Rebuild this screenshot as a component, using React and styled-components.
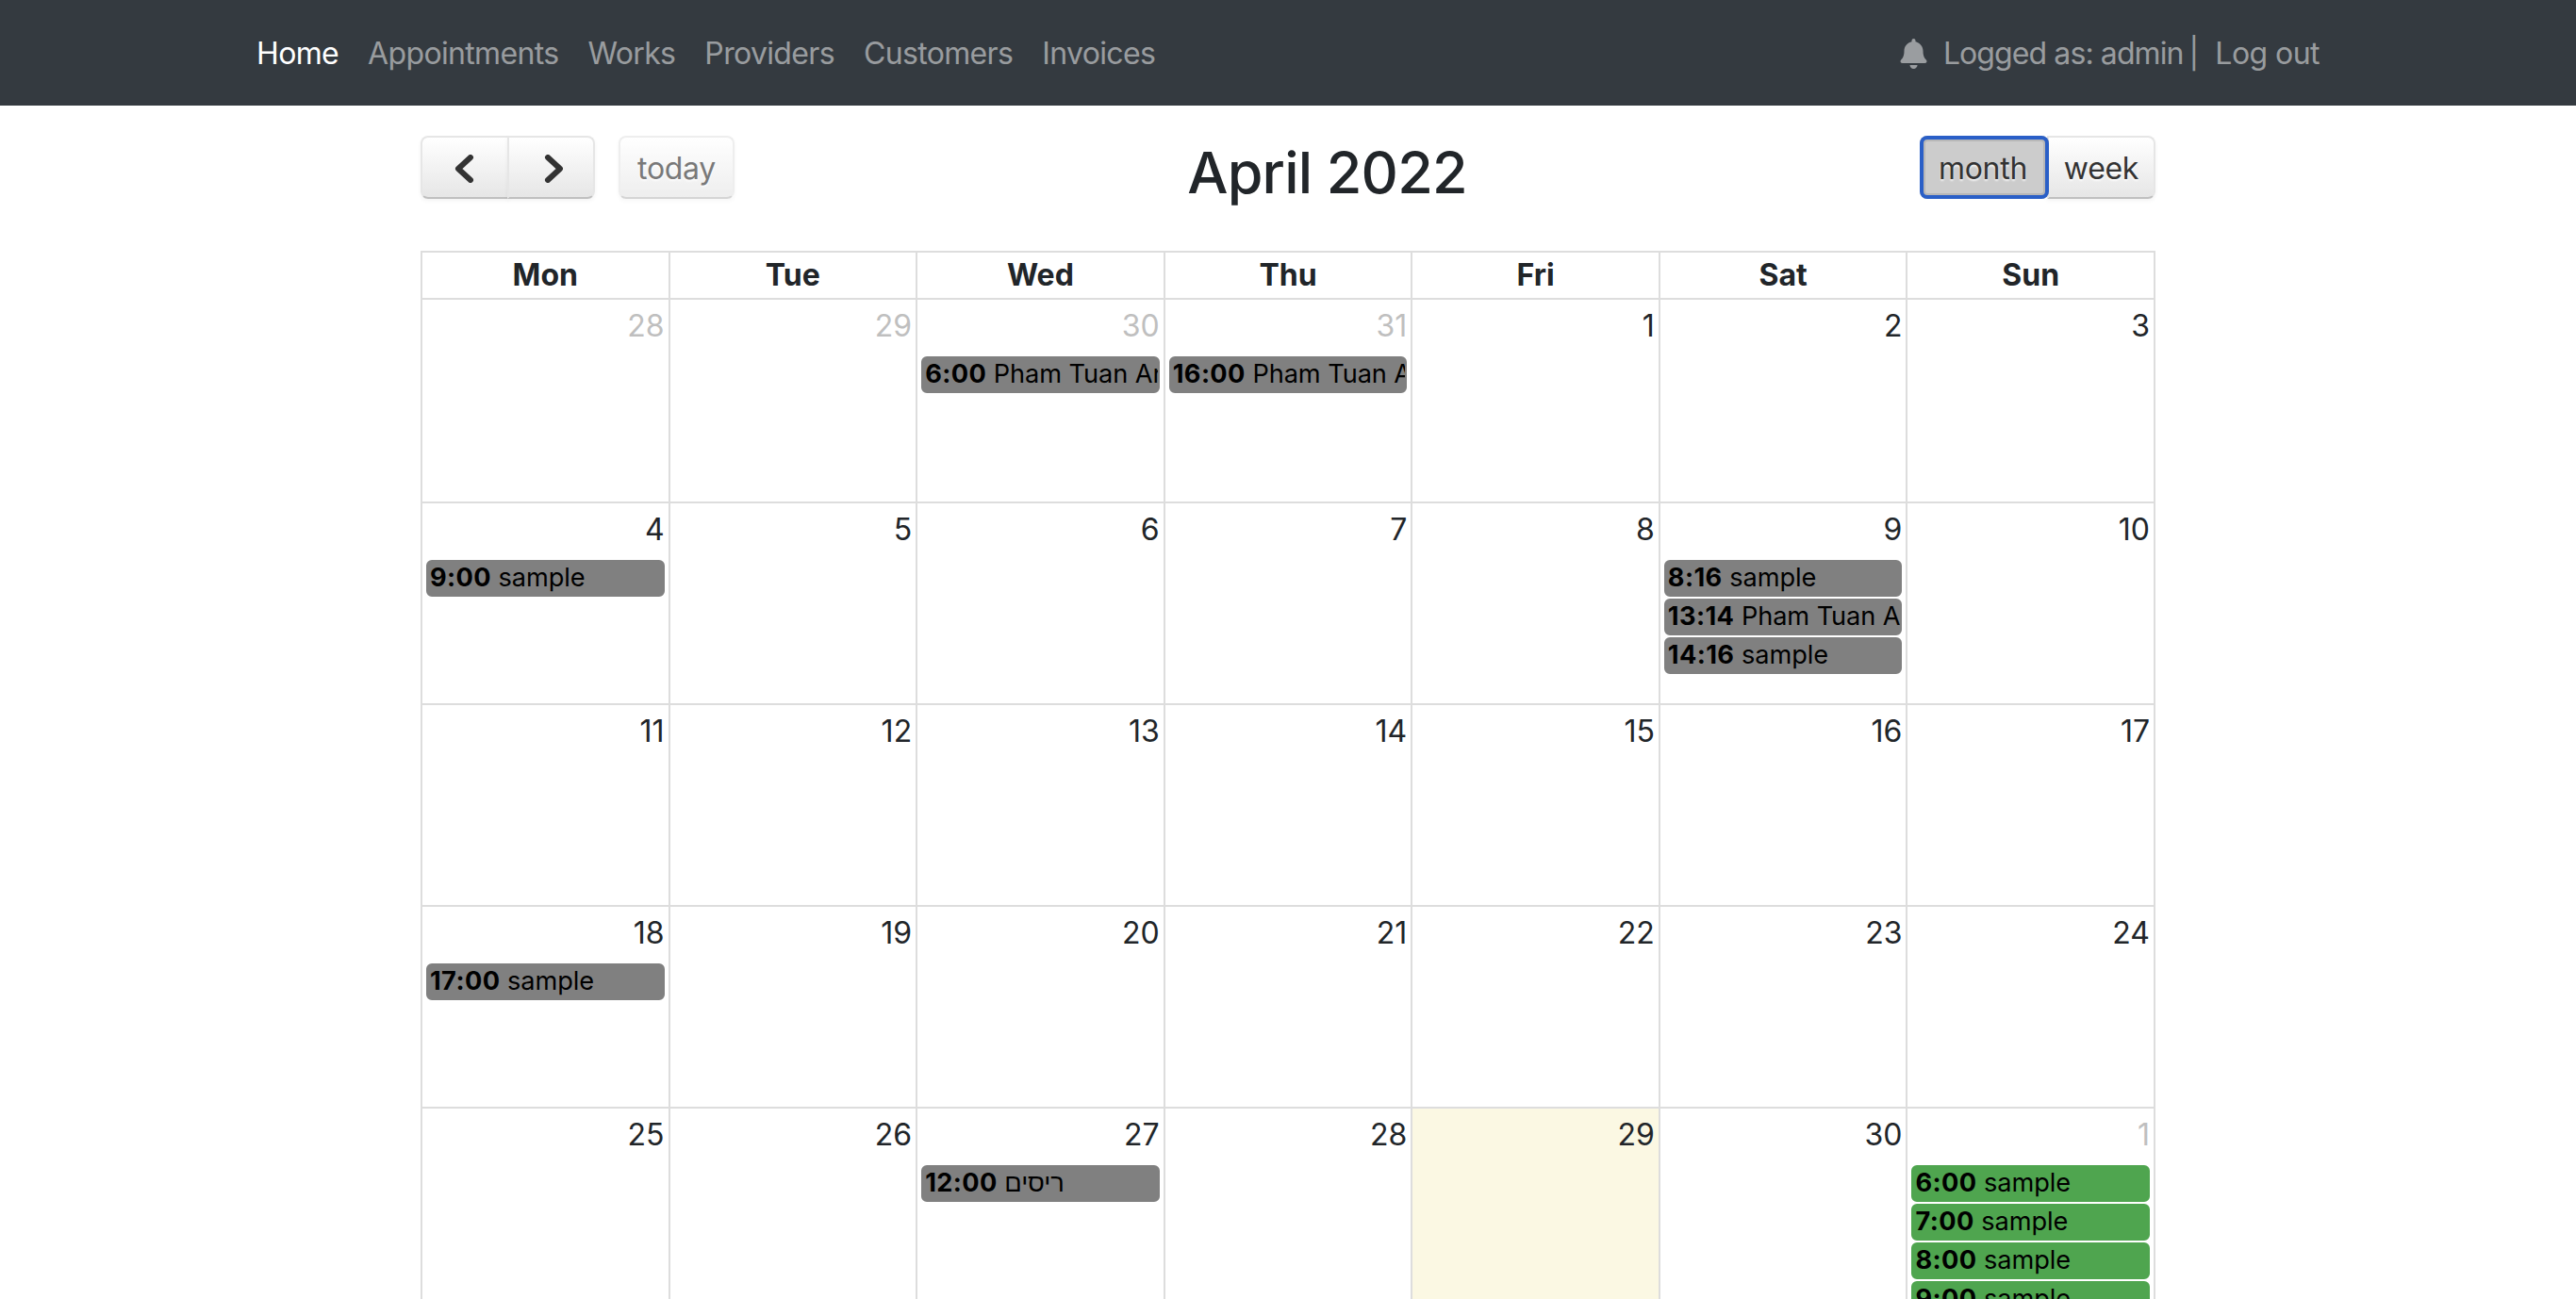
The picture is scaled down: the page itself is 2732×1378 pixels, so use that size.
import React from 'react';
import styled, { createGlobalStyle, css } from 'styled-components';
import { FaBell } from 'react-icons/fa';

const GlobalStyle = createGlobalStyle`
  html, body {
    margin: 0;
    height: 100%;
    overflow: hidden;
    background: #fff;
  }
  body {
    font-family: Inter, "Liberation Sans", sans-serif;
    font-size: 32px;
    line-height: 1.5;
    color: #212529;
  }
  * { box-sizing: border-box; }
`;

//-----------Navbar-----------//

const Navbar = styled.nav`
  display: flex;
  align-items: center;
  justify-content: space-between;
  height: 112px;
  padding: 2px 272px 0;
  letter-spacing: -0.65px;
  background-color: #343a40;
`;
const NavList = styled.div`
  display: flex;
  align-items: center;
  gap: 31px;
`;
const NavLink = styled.a`
  color: ${(p) => (p.$active ? '#fff' : 'rgba(255, 255, 255, 0.5)')};
  text-decoration: none;
`;
const UserArea = styled.div`
  display: flex;
  align-items: center;
  letter-spacing: -0.9px;
  color: rgba(255, 255, 255, 0.5);
`;
const BellIcon = styled(FaBell)`
  width: 29px;
  height: 32px;
  margin-right: 17px;
`;
const Separator = styled.span`
  margin-left: 6px;
`;
const LogOut = styled(NavLink)`
  margin-left: 18px;
  letter-spacing: -0.55px;
`;

//-----------Calendar-----------//

const Calendar = styled.main`
  width: 1840px;
  margin: 32px 0 0 446px;
`;
const Toolbar = styled.div`
  display: flex;
  justify-content: space-between;
  align-items: flex-start;
  margin-bottom: 44px;
`;
const ButtonRow = styled.div`
  display: flex;
  gap: 25px;
`;
const ButtonGroup = styled.div`
  display: flex;
`;
const Button = styled.button`
  display: flex;
  align-items: center;
  justify-content: center;
  width: ${(p) => p.$width}px;
  height: 67px;
  padding: 2px 0 0;
  font: inherit;
  letter-spacing: -0.3px;
  color: #333;
  text-shadow: 0 2px 2px rgba(255, 255, 255, 0.75);
  background: linear-gradient(#fff, #e6e6e6);
  border: 2px solid;
  border-color: #e6e6e6 #e6e6e6 #bfbfbf;
  border-radius: ${(p) => (p.$side === 'left' ? '8px 0 0 8px' : p.$side === 'right' ? '0 8px 8px 0' : '8px')};
  box-shadow: inset 0 2px 0 rgba(255, 255, 255, 0.2), 0 2px 4px rgba(0, 0, 0, 0.05);
  ${(p) => p.$side === 'right' && css`margin-left: -2px;`}
  ${(p) => p.$disabled && css`opacity: 0.65;`}
  ${(p) => p.$selected && css`
    position: relative;
    padding-right: 3px;
    background: #ccc;
    border: 0;
    border-radius: 8px;
    box-shadow: inset 0 0 0 4px #2a5fc7, inset 0 0 0 6px rgba(0, 0, 0, 0.1);
  `}
`;
const Title = styled.h2`
  margin: 0;
  font-size: 61px;
  font-weight: 500;
  line-height: 78px;
  letter-spacing: -0.8px;
`;
const Grid = styled.div`
  display: grid;
  grid-template-columns: repeat(7, 1fr);
  grid-template-rows: 50px 216px repeat(3, 214px) 214px;
  border-top: 2px solid #ddd;
  border-left: 2px solid #ddd;
`;
const HeadCell = styled.div`
  display: flex;
  align-items: center;
  justify-content: center;
  font-weight: 700;
  line-height: 1;
  border-right: 2px solid #ddd;
  border-bottom: 2px solid #ddd;
`;
const DayCell = styled.div`
  min-width: 0;
  overflow: hidden;
  background-color: ${(p) => (p.$today ? '#fbf8e3' : '#fff')};
  border-right: 2px solid #ddd;
  border-bottom: 2px solid #ddd;
`;
const DayNumber = styled.div`
  padding: 4px 4px 0 0;
  text-align: right;
  color: ${(p) => (p.$muted ? '#bfbfbf' : '#212529')};
`;
const EventList = styled.div`
  display: flex;
  flex-direction: column;
  gap: 2px;
  margin: 8px 4px 0 4px;
`;
const Event = styled.div`
  height: 39px;
  padding-left: 2px;
  overflow: hidden;
  font-size: 27.2px;
  line-height: 34px;
  letter-spacing: -0.08px;
  white-space: nowrap;
  color: #000;
  background-color: ${(p) => (p.$green ? '#4fa54f' : '#808080')};
  border: 2px solid ${(p) => (p.$green ? '#4fa54f' : '#808080')};
  border-radius: 6px;
`;
const EventTime = styled.b`
  font-weight: 700;
  letter-spacing: 0.4px;
`;

const WEEKDAYS = ['Mon', 'Tue', 'Wed', 'Thu', 'Fri', 'Sat', 'Sun'];

const CUSTOMER = 'Pham Tuan Anh';
const DAYS = [
  { n: 28, muted: true }, { n: 29, muted: true },
  { n: 30, muted: true, events: [['6:00', CUSTOMER]] },
  { n: 31, muted: true, events: [['16:00', CUSTOMER]] },
  { n: 1 }, { n: 2 }, { n: 3 },
  { n: 4, events: [['9:00', 'sample']] },
  { n: 5 }, { n: 6 }, { n: 7 }, { n: 8 },
  { n: 9, events: [['8:16', 'sample'], ['13:14', CUSTOMER], ['14:16', 'sample']] },
  { n: 10 }, { n: 11 }, { n: 12 }, { n: 13 }, { n: 14 }, { n: 15 }, { n: 16 }, { n: 17 },
  { n: 18, events: [['17:00', 'sample']] },
  { n: 19 }, { n: 20 }, { n: 21 }, { n: 22 }, { n: 23 }, { n: 24 },
  { n: 25 }, { n: 26 },
  { n: 27, events: [['12:00', 'ריסים']] },
  { n: 28 },
  { n: 29, today: true },
  { n: 30 },
  { n: 1, muted: true, green: true, events: [['6:00', 'sample'], ['7:00', 'sample'], ['8:00', 'sample'], ['9:00', 'sample']] },
];

const Chevron = ({ flip }) => (
  <svg width="24" height="30" viewBox="0 0 24 30" fill="none">
    <polyline
      points={flip ? '8,3 21,15 8,27' : '18,3 5,15 18,27'}
      stroke="#333"
      strokeWidth="6"
      strokeLinecap="round"
      strokeLinejoin="round"
    />
  </svg>
);

const App = () => (
  <>
    <GlobalStyle />
    <Navbar>
      <NavList>
        <NavLink $active>Home</NavLink>
        <NavLink>Appointments</NavLink>
        <NavLink>Works</NavLink>
        <NavLink>Providers</NavLink>
        <NavLink>Customers</NavLink>
        <NavLink>Invoices</NavLink>
      </NavList>
      <UserArea>
        <BellIcon />
        <span>Logged as: admin</span>
        <Separator>|</Separator>
        <LogOut>Log out</LogOut>
      </UserArea>
    </Navbar>
    <Calendar>
      <Toolbar>
        <ButtonRow>
          <ButtonGroup>
            <Button $width={94} $side="left"><Chevron /></Button>
            <Button $width={93} $side="right"><Chevron flip /></Button>
          </ButtonGroup>
          <Button $width={123} $disabled>today</Button>
        </ButtonRow>
        <Title>April 2022</Title>
        <ButtonGroup>
          <Button $width={137} $selected>month</Button>
          <Button $width={115} $side="right">week</Button>
        </ButtonGroup>
      </Toolbar>
      <Grid>
        {WEEKDAYS.map((day) => (
          <HeadCell key={day}>{day}</HeadCell>
        ))}
        {DAYS.map((day, i) => (
          <DayCell key={i} $today={day.today}>
            <DayNumber $muted={day.muted}>{day.n}</DayNumber>
            {day.events && (
              <EventList>
                {day.events.map(([time, title]) => (
                  <Event key={time} $green={day.green}>
                    <EventTime>{time}</EventTime> {title}
                  </Event>
                ))}
              </EventList>
            )}
          </DayCell>
        ))}
      </Grid>
    </Calendar>
  </>
);

export default App;
